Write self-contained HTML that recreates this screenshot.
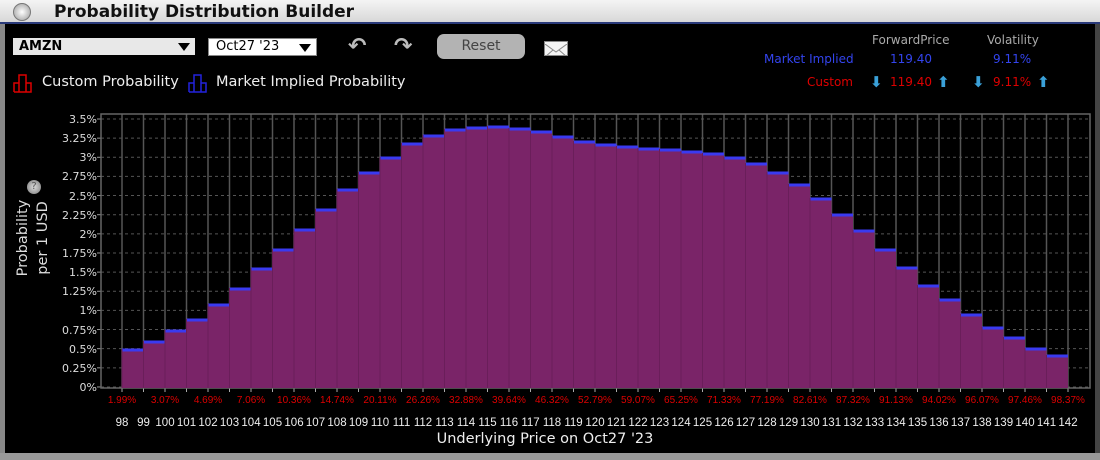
<!DOCTYPE html>
<html><head><meta charset="utf-8"><style>
body{margin:0;width:1100px;height:460px;background:#000;overflow:hidden;font-family:"DejaVu Sans","Liberation Sans",sans-serif;position:relative}
.title{position:absolute;left:0;top:0;width:1100px;height:22px;background:linear-gradient(#f4f4f4,#d8d8d8);border-bottom:2px solid #2a3a7a;}
.title span{position:absolute;left:54px;top:2px;font-weight:bold;font-size:17px;color:#111}
.title i{position:absolute;left:13px;top:3px;width:16px;height:16px;border-radius:50%;background:radial-gradient(#fff,#999);border:1px solid #777}
.side{position:absolute;top:24px;width:5px;height:430px;background:#888}
.ab{position:absolute;font-size:13px}
.sel{position:absolute;background:#e8e8e8;color:#000;font-weight:bold;font-size:13px;height:17px;line-height:17px}
.tri{position:absolute;right:5px;top:5px;border-left:6px solid transparent;border-right:6px solid transparent;border-top:8px solid #000}
</style></head><body>
<div class="title"><i></i><span>Probability Distribution Builder</span></div>
<div class="side" style="left:0"></div><div class="side" style="left:1095px;background:#444"></div>
<div style="position:absolute;left:0;top:453px;width:1100px;height:7px;background:#999"></div>
<div class="sel" style="left:13px;top:38px;width:176px;padding-left:6px">AMZN<div class="tri"></div></div>
<div class="sel" style="left:208px;top:38px;width:100px;padding-left:7px;font-weight:normal;background:#fff;border:1px solid #888;height:16px;line-height:16px">Oct27 '23<div class="tri"></div></div>
<div class="ab" style="left:348px;top:34px;color:#bbb;font-size:22px;font-weight:bold">↶</div>
<div class="ab" style="left:394px;top:34px;color:#bbb;font-size:22px;font-weight:bold">↷</div>
<div style="position:absolute;left:437px;top:34px;width:88px;height:25px;border-radius:7px;background:#b3b3b3;color:#444;font-size:14px;text-align:center;line-height:25px">Reset</div>
<div style="position:absolute;left:544px;top:41px;width:22px;height:13px;background:#f4f4f4;border:1px solid #888;overflow:hidden"><svg width="22" height="13"><path d="M0 0L11 8L22 0M0 13L8 6M22 13L14 6" stroke="#888" fill="none"/></svg></div>
<svg style="position:absolute;left:13px;top:73px" width="20" height="20"><path d="M1 19V10H6V19M6 19V2H13V19M13 19V10H18V19H1" stroke="#d00" fill="none" stroke-width="1.5"/></svg>
<div class="ab" style="left:42px;top:74px;color:#eee;font-size:14.5px">Custom Probability</div>
<svg style="position:absolute;left:188px;top:73px" width="20" height="20"><path d="M1 19V10H6V19M6 19V2H13V19M13 19V10H18V19H1" stroke="#22d" fill="none" stroke-width="1.5"/></svg>
<div class="ab" style="left:216px;top:74px;color:#eee;font-size:14.5px">Market Implied Probability</div>
<div class="ab" style="left:872px;top:33px;color:#aaa;font-size:12px">ForwardPrice</div>
<div class="ab" style="left:987px;top:33px;color:#aaa;font-size:12px">Volatility</div>
<div class="ab" style="left:764px;top:52px;color:#3344ee;font-size:12px">Market Implied</div>
<div class="ab" style="left:890px;top:52px;color:#3344ee;font-size:12px">119.40</div>
<div class="ab" style="left:993px;top:52px;color:#3344ee;font-size:12px">9.11%</div>
<div class="ab" style="left:807px;top:75px;color:#d00;font-size:12px">Custom</div>
<div class="ab" style="left:870px;top:73px;color:#3aa0d8;font-size:15px;font-weight:bold">⬇</div>
<div class="ab" style="left:890px;top:75px;color:#d00;font-size:12px">119.40</div>
<div class="ab" style="left:937px;top:73px;color:#3aa0d8;font-size:15px;font-weight:bold">⬆</div>
<div class="ab" style="left:972px;top:73px;color:#3aa0d8;font-size:15px;font-weight:bold">⬇</div>
<div class="ab" style="left:993px;top:75px;color:#d00;font-size:12px">9.11%</div>
<div class="ab" style="left:1037px;top:73px;color:#3aa0d8;font-size:15px;font-weight:bold">⬆</div>
<div class="ab" style="top:180px;width:14px;height:14px;border-radius:50%;background:radial-gradient(#ddd,#777);color:#555;font-size:10px;text-align:center;line-height:14px;left:27px">?</div>
<div class="ab" style="left:-37px;top:218px;transform:rotate(-90deg);width:140px;text-align:center;color:#ddd;font-size:14.5px;line-height:20px">Probability<br>per 1 USD</div>
<svg id="ch" style="position:absolute;left:0;top:0" width="1100" height="460" font-family="DejaVu Sans, Liberation Sans, sans-serif">
<g id="grid"></g><g id="bars"></g>
<g fill="#ddd" font-size="11" text-anchor="end">
<text x="97" y="123">3.5%</text><text x="97" y="142">3.25%</text><text x="97" y="161">3%</text><text x="97" y="180">2.75%</text><text x="97" y="200">2.5%</text><text x="97" y="219">2.25%</text><text x="97" y="238">2%</text><text x="97" y="257">1.75%</text><text x="97" y="276">1.5%</text><text x="97" y="295">1.25%</text><text x="97" y="314">1%</text><text x="97" y="334">0.75%</text><text x="97" y="353">0.5%</text><text x="97" y="372">0.25%</text><text x="97" y="391">0%</text>
</g>
<g fill="#d00" font-size="10" text-anchor="middle" font-family="Liberation Sans, sans-serif">
<text x="122" y="403">1.99%</text><text x="165" y="403">3.07%</text><text x="208" y="403">4.69%</text><text x="251" y="403">7.06%</text><text x="294" y="403">10.36%</text><text x="337" y="403">14.74%</text><text x="380" y="403">20.11%</text><text x="423" y="403">26.26%</text><text x="466" y="403">32.88%</text><text x="509" y="403">39.64%</text><text x="552" y="403">46.32%</text><text x="595" y="403">52.79%</text><text x="638" y="403">59.07%</text><text x="681" y="403">65.25%</text><text x="724" y="403">71.33%</text><text x="767" y="403">77.19%</text><text x="810" y="403">82.61%</text><text x="853" y="403">87.32%</text><text x="896" y="403">91.13%</text><text x="939" y="403">94.02%</text><text x="982" y="403">96.07%</text><text x="1025" y="403">97.46%</text><text x="1068" y="403">98.37%</text>
</g>
<g fill="#eee" font-size="11.5" text-anchor="middle" font-family="Liberation Sans, sans-serif">
<text x="122" y="426">98</text><text x="143.5" y="426">99</text><text x="165" y="426">100</text><text x="186.5" y="426">101</text><text x="208" y="426">102</text><text x="229.5" y="426">103</text><text x="251" y="426">104</text><text x="272.5" y="426">105</text><text x="294" y="426">106</text><text x="315.5" y="426">107</text><text x="337" y="426">108</text><text x="358.5" y="426">109</text><text x="380" y="426">110</text><text x="401.5" y="426">111</text><text x="423" y="426">112</text><text x="444.5" y="426">113</text><text x="466" y="426">114</text><text x="487.5" y="426">115</text><text x="509" y="426">116</text><text x="530.5" y="426">117</text><text x="552" y="426">118</text><text x="573.5" y="426">119</text><text x="595" y="426">120</text><text x="616.5" y="426">121</text><text x="638" y="426">122</text><text x="659.5" y="426">123</text><text x="681" y="426">124</text><text x="702.5" y="426">125</text><text x="724" y="426">126</text><text x="745.5" y="426">127</text><text x="767" y="426">128</text><text x="788.5" y="426">129</text><text x="810" y="426">130</text><text x="831.5" y="426">131</text><text x="853" y="426">132</text><text x="874.5" y="426">133</text><text x="896" y="426">134</text><text x="917.5" y="426">135</text><text x="939" y="426">136</text><text x="960.5" y="426">137</text><text x="982" y="426">138</text><text x="1003.5" y="426">139</text><text x="1025" y="426">140</text><text x="1046.5" y="426">141</text><text x="1068" y="426">142</text>
</g>
<text x="545" y="443" fill="#eee" font-size="14.5" text-anchor="middle">Underlying Price on Oct27 '23</text>
</svg>
<script>
var g=document.getElementById('grid'),b=document.getElementById('bars'),h='';
for(var k=0;k<15;k++){var y=119+k*19.14;h+='<line x1="101" x2="1090" y1="'+y+'" y2="'+y+'" stroke="#555" stroke-dasharray="3,3"/><line x1="97" x2="101" y1="'+y+'" y2="'+y+'" stroke="#999"/>';}
for(var i=0;i<45;i++){var x=122+21.5*i;h+='<line x1="'+x+'" x2="'+x+'" y1="114" y2="388" stroke="#555" stroke-width="1.5"/><line x1="'+x+'" x2="'+x+'" y1="388" y2="392" stroke="#aaa"/>';}
h+='<rect x="101" y="114" width="989" height="274" fill="none" stroke="#666" stroke-width="1.5"/>';
g.innerHTML=h;
var t=[349,341,330,319,304,288,268,249,229,209,189,172,157,143,135,129,127,126,128,131,136,141,144,146,148,149,151,153,157,163,172,184,198,214,230,249,267,285,299,314,327,337,348,355],s='';
for(var i=0;i<44;i++){var x=122+21.5*i;s+='<rect x="'+x+'" y="'+t[i]+'" width="21.5" height="'+(388-t[i])+'" fill="#7a2468"/><line x1="'+x+'" x2="'+(x+21.5)+'" y1="'+(t[i]+1)+'" y2="'+(t[i]+1)+'" stroke="#3a3af0" stroke-width="3"/><line x1="'+x+'" x2="'+x+'" y1="'+t[i]+'" y2="388" stroke="#6a1e5a" stroke-width="1"/>';}
b.innerHTML=s;
</script>
</body></html>
